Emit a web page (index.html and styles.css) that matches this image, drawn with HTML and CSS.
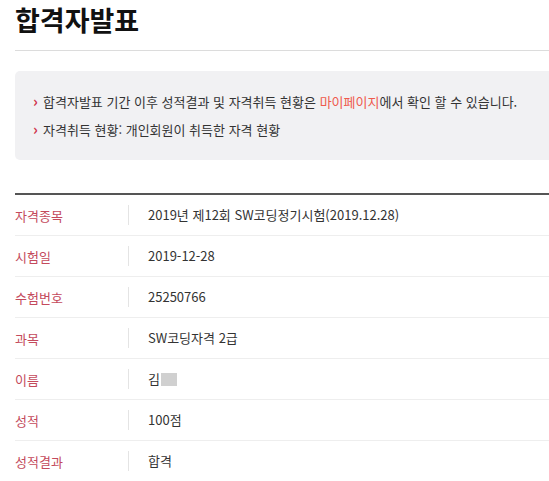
FILE: index.html
```html
<!DOCTYPE html>
<html lang="ko">
<head>
<meta charset="utf-8">
<link rel="stylesheet" href="styles.css">
</head>
<body>
<div class="page">
  <h1 class="title">합격자발표</h1>
  <div class="notice">
    <p class="item"><span class="arrow">›</span><span>합격자발표 기간 이후 성적결과 및 자격취득 현황은 <span class="hl">마이페이지</span>에서 확인 할 수 있습니다.</span></p>
    <p class="item"><span class="arrow">›</span><span>자격취득 현황: 개인회원이 취득한 자격 현황</span></p>
  </div>
  <div class="table">
    <div class="row"><div class="label">자격종목</div><div class="value">2019년 제12회 SW코딩정기시험(2019.12.28)</div></div>
    <div class="row"><div class="label">시험일</div><div class="value">2019-12-28</div></div>
    <div class="row"><div class="label">수험번호</div><div class="value">25250766</div></div>
    <div class="row"><div class="label">과목</div><div class="value">SW코딩자격 2급</div></div>
    <div class="row"><div class="label">이름</div><div class="value">김<span class="blur"></span></div></div>
    <div class="row"><div class="label">성적</div><div class="value">100점</div></div>
    <div class="row"><div class="label">성적결과</div><div class="value">합격</div></div>
  </div>
</div>
</body>
</html>
```

FILE: styles.css
```css
* { box-sizing: border-box; }
html, body { margin: 0; padding: 0; background: #fff; overflow: hidden; }
body {
  font-family: "Noto Sans CJK KR", "Noto Sans", sans-serif;
  color: #333;
}
.page { padding-left: 15px; overflow: hidden; }
.title {
  margin: 0;
  padding-top: 3px;
  height: 51px;
  font-size: 27px;
  line-height: 34px;
  font-weight: 700;
  color: #111;
  border-bottom: 1px solid #dcdcdc;
}
.notice {
  margin-top: 20px;
  margin-right: -10px;
  background: #f1f1f3;
  border-radius: 5px;
  padding: 17px 0 16px 18px;
  height: 89px;
}
.item {
  margin: 0;
  font-size: 13px;
  line-height: 28px;
  color: #333;
  display: flex;
  align-items: center;
  white-space: nowrap;
}
.arrow {
  color: #d0344c;
  font-weight: 700;
  font-size: 15px;
  width: 10px;
  margin-top: -2px;
  flex: none;
}
.hl { color: #ef5a4d; }
.table {
  margin-top: 33px;
  border-top: 2px solid #555;
}
.row {
  display: flex;
  align-items: center;
  height: 41px;
  border-bottom: 1px solid #eee;
  font-size: 13px;
}
.label {
  width: 113px;
  color: #c44a5c;
}
.value {
  border-left: 1px solid #e4e4e4;
  height: 20px;
  line-height: 20px;
  padding-left: 19px;
  color: #333;
  display: flex;
  align-items: center;
}
.blur {
  display: inline-block;
  width: 16px;
  height: 13px;
  background: #d0d0d0;
  margin-left: 1px;
}
```
